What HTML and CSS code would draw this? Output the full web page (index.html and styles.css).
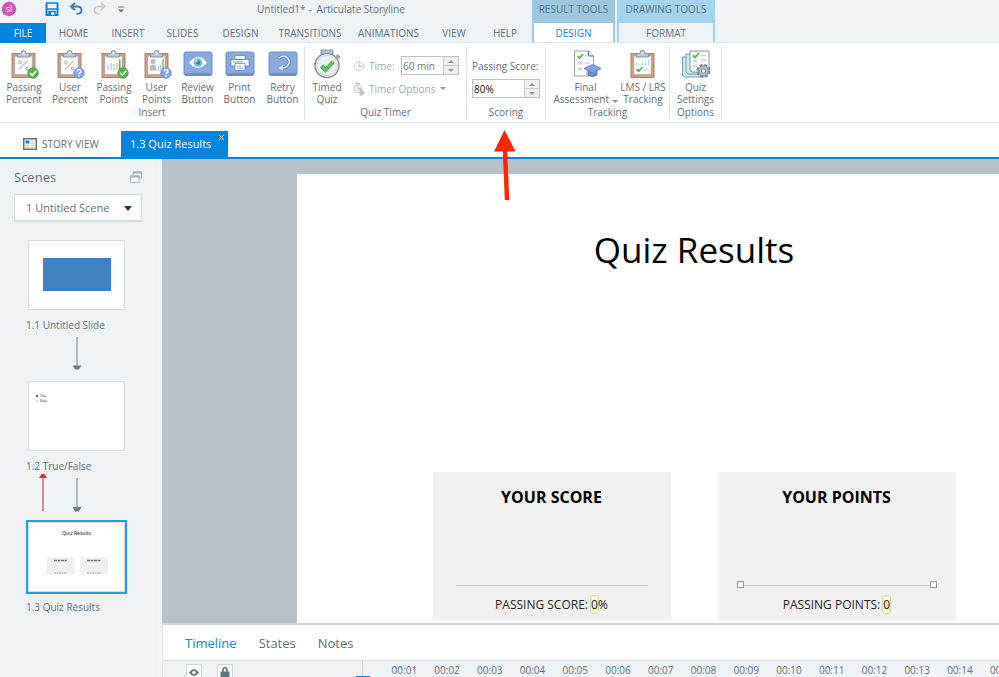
FILE: index.html
```html
<!DOCTYPE html>
<html lang="en">
<head>
    <meta charset="UTF-8">
    <title>Untitled1* - Articulate Storyline</title>
    <link rel="stylesheet" href="styles.css">
</head>
<body>

<!-- shared icon shapes -->
<svg class="defs" width="0" height="0" aria-hidden="true">
    <symbol id="clipboard" viewBox="0 0 32 32">
        <rect x="4" y="5.500" width="23" height="24" fill="#dc9a76" stroke="#94807a" stroke-width=".9"/>
        <rect x="6.700" y="8" width="17.600" height="18.700" fill="#fdfdfd" stroke="#a3a7ad" stroke-width=".9"/>
        <path d="M9.500 9v-3.500h3.500q0-3 2.500-3t2.500 3h3.500v3.500z" fill="#c0cad9" stroke="#8591a0"/>
        <circle cx="15.500" cy="5" r="1" fill="#fff"/>
    </symbol>
    <symbol id="percent" viewBox="0 0 32 32">
        <path d="M11 21.500L19.500 13" stroke="#c2c2c2" stroke-width="1.300"/>
        <circle cx="12" cy="14.500" r="1.300" fill="none" stroke="#c2c2c2" stroke-width="1.200"/>
        <circle cx="18.500" cy="20.500" r="1.300" fill="none" stroke="#c2c2c2" stroke-width="1.200"/>
    </symbol>
    <symbol id="ok" viewBox="0 0 32 32">
        <circle cx="25" cy="25" r="5.200" fill="#58b24c" stroke="#4ea447"/>
        <path d="M22 25l2.300 2.300 4-4.500" fill="none" stroke="#fff" stroke-width="1.600"/>
    </symbol>
    <symbol id="ask" viewBox="0 0 32 32">
        <circle cx="25" cy="25" r="5.200" fill="#86a5e2" stroke="#7293d4"/>
        <path d="M23 23.500q.2-2 2-2t2 1.700q0 1-1.200 1.700-.8.500-.8 1.400M25 27.500v1.300" fill="none" stroke="#fff" stroke-width="1.400"/>
    </symbol>
    <symbol id="tile" viewBox="0 0 32 32">
        <rect x="2" y="4" width="28" height="23.500" rx="2" fill="#89a9df" stroke="#6c8ccb"/>
        <path d="M3 26h26" stroke="#6f90cd" stroke-width="2"/>
    </symbol>
</svg>

<header class="top">
    <div class="top-main">
        <div class="titlebar">
            <svg class="logo" viewBox="0 0 16 16" width="16" height="16">
                <circle cx="8" cy="8" r="7.200" fill="#d94fb4"/>
                <text x="8" y="11" text-anchor="middle" font-size="9" fill="#fff">sl</text>
            </svg>
            <div class="quick">
                <button aria-label="Save"><svg width="14" height="14" viewBox="0 0 14 14"><path d="M1.500 1v12h11V1" fill="none" stroke="#0b86dc" stroke-width="2"/><path d="M1 1h12M1 7h12" stroke="#0b86dc" stroke-width="1.500"/><path d="M4 8.500h6V13H4z" fill="#fff"/><path d="M4 13V9.500h6V13M5.500 10v3" fill="none" stroke="#0b86dc" stroke-width="1.500"/></svg></button>
                <button aria-label="Undo"><svg width="14" height="14" viewBox="0 0 14 14"><path d="M6 1L2 4.500 6 8M2.500 4.500H9q3.500.2 3.500 3.700T7.500 12" fill="none" stroke="#3a7cb4" stroke-width="1.900"/></svg></button>
                <button aria-label="Redo"><svg width="14" height="14" viewBox="0 0 14 14"><path d="M8 1l4 3.500L8 8M11.500 4.500H5Q1.500 4.700 1.500 8.200T6.500 12" fill="none" stroke="#cdd2d6" stroke-width="1.900"/></svg></button>
                <button aria-label="Customize"><svg width="8" height="14" viewBox="0 0 8 14"><path d="M1 5h6" stroke="#6c777d"/><path d="M1 7.500h6l-3 3z" fill="#6c777d"/></svg></button>
            </div>
            <h1 class="app-title">Untitled1* -&nbsp; Articulate Storyline</h1>
        </div>
        <nav class="menu">
            <button class="file">FILE</button>
            <button>HOME</button>
            <button>INSERT</button>
            <button>SLIDES</button>
            <button>DESIGN</button>
            <button>TRANSITIONS</button>
            <button>ANIMATIONS</button>
            <button>VIEW</button>
            <button>HELP</button>
        </nav>
    </div>
    <div class="context result">
        <span>RESULT TOOLS</span>
        <button class="active">DESIGN</button>
    </div>
    <div class="context drawing">
        <span>DRAWING TOOLS</span>
        <button>FORMAT</button>
    </div>
</header>

<section class="ribbon">
    <div class="group insert">
        <div class="items">
            <button class="tool"><svg viewBox="0 0 32 32"><use href="#clipboard"/><use href="#percent"/><use href="#ok"/></svg>Passing<br>Percent</button>
            <button class="tool"><svg viewBox="0 0 32 32"><use href="#clipboard"/><use href="#percent"/><use href="#ask"/></svg>User<br>Percent</button>
            <button class="tool"><svg viewBox="0 0 32 32"><use href="#clipboard"/><path d="M10 22v-5M13 22v-7M16 22v-6M19 22v-7" stroke="#c6c6c6" stroke-width="1.300"/><path d="M21.700 22V11.500" stroke="#5cc056" stroke-width="1.600"/><use href="#ok"/></svg>Passing<br>Points</button>
            <button class="tool"><svg viewBox="0 0 32 32"><use href="#clipboard"/><circle cx="12" cy="13.500" r="2.500" fill="#bcbcbc"/><path d="M8.500 22.500q0-6 3.500-6t3.500 6z" fill="#bcbcbc"/><path d="M17.500 22.500v-4M19.500 22.500v-6" stroke="#c6c6c6" stroke-width="1.200"/><path d="M22 22.500V11.500" stroke="#5cc056" stroke-width="1.400"/><use href="#ask"/></svg>User<br>Points</button>
            <button class="tool"><svg viewBox="0 0 32 32"><use href="#tile"/><path d="M6.500 14.500q9.500-12 19 0-9.500 12-19 0z" fill="#fff" stroke="#6d8fca" stroke-width=".6"/><circle cx="16" cy="14.500" r="4.300" fill="#6bbbe6"/><circle cx="16" cy="14.500" r="2.200" fill="#3a80b6"/><circle cx="14.500" cy="13" r="1" fill="#fff"/></svg>Review<br>Button</button>
            <button class="tool"><svg viewBox="0 0 32 32"><use href="#tile"/><path d="M11 7.500h10v4H11zM7 11.500h18v6.500H7z" fill="#f5f8fc" stroke="#6486c2" stroke-width=".8"/><path d="M9 14h10" stroke="#8ba7da"/><path d="M11 15.500h10v7H11z" fill="#fff" stroke="#6486c2" stroke-width=".8"/><path d="M13 18h4M13 20h6" stroke="#8ba7da"/></svg>Print<br>Button</button>
            <button class="tool"><svg viewBox="0 0 32 32"><use href="#tile"/><path d="M12 10q5-4 8.500 0t0 8q-2 2-4.500 2" fill="none" stroke="#6486c2" stroke-width="3"/><path d="M12 10q5-4 8.500 0t0 8q-2 2-5.500 2" fill="none" stroke="#dbe6f7" stroke-width="1.600"/><path d="M16 17l-4.500 3 4.500 2.700z" fill="#dbe6f7"/></svg>Retry<br>Button</button>
        </div>
        <h2>Insert</h2>
    </div>
    <div class="group timer">
        <div class="items">
            <button class="tool"><svg viewBox="0 0 32 32"><path d="M10 2h12v4H10z" fill="#b8c3d0" stroke="#8591a0"/><path d="M25.500 7l3 3" stroke="#98a2ab" stroke-width="3"/><circle cx="16" cy="17.500" r="12" fill="#eef1f3" stroke="#8d979f" stroke-width="1.600"/><circle cx="16" cy="17.500" r="10" fill="none" stroke="#d5dbe0"/><path d="M10.500 18l4 4 7.500-8" fill="none" stroke="#4a9f4a" stroke-width="4"/><path d="M10.500 18l4 4 7.500-8" fill="none" stroke="#66c05b" stroke-width="2.500"/></svg>Timed<br>Quiz</button>
            <div class="timer-options">
                <div class="row">
                    <svg width="12" height="12" viewBox="0 0 12 12"><circle cx="6" cy="6" r="4.500" fill="none" stroke="#ccc"/><path d="M6 3v3.500h2.500" fill="none" stroke="#bbb"/></svg>
                    <label for="time">Time:</label>
                    <span class="spin muted">
                        <input id="time" type="text" value="60 min">
                        <span class="steps"><button aria-label="More time"><i class="up"></i></button><button aria-label="Less time"><i class="down"></i></button></span>
                    </span>
                </div>
                <button class="row drop">
                    <svg width="12" height="14" viewBox="0 0 12 14"><path d="M3 1.500h4" stroke="#c4c4c4" stroke-width="2"/><circle cx="5" cy="7" r="4" fill="#f2f2f2" stroke="#c8c8c8"/><path d="M5 4.500V7h2M7 6l5 5-5 3z" fill="#c4c4c4" stroke="#c4c4c4" stroke-width=".6"/></svg>
                    <span>Timer Options</span><i class="down"></i>
                </button>
            </div>
        </div>
        <h2>Quiz Timer</h2>
    </div>
    <div class="group scoring">
        <div class="items">
            <label for="score">Passing Score:</label>
            <span class="spin">
                <input id="score" type="text" value="80%">
                <span class="steps"><button aria-label="Raise score"><i class="up"></i></button><button aria-label="Lower score"><i class="down"></i></button></span>
            </span>
        </div>
        <h2>Scoring</h2>
    </div>
    <div class="group tracking">
        <div class="items">
            <button class="tool"><svg viewBox="0 0 32 32"><path d="M4.500 3h14l5 5v20h-19z" fill="#fcfcfc" stroke="#9aa1a7"/><path d="M18.500 3v5h5" fill="#e2e6e9" stroke="#6b747b"/><path d="M7.500 8l2 2 3.500-4" fill="none" stroke="#56b650" stroke-width="1.800"/><path d="M15 8h2M15 15h5M15 20h3" stroke="#d3d6d9" stroke-width="1.500"/><path d="M8 15h4M8 21h4" stroke="#d5d8da" stroke-width="3"/><path d="M18 22v5q4.500 3 9 0v-5z" fill="#6d91d4" stroke="#5878b8"/><path d="M14 20.500l8.500-4 8.500 4-8.500 4.500z" fill="#83a4e0" stroke="#5878b8" stroke-width=".8"/><path d="M17 23v5" stroke="#d0ac6b" stroke-width="1.300"/></svg>Final<br>Assessment <i class="down"></i></button>
            <button class="tool"><svg viewBox="0 0 32 32"><use href="#clipboard"/><path d="M9.500 17v-2M12.500 17v-1M15.500 17v-2M18.500 17v-3M21.500 17v-5" stroke="#a8d6ef" stroke-width="1.200"/><path d="M9.500 21l2.200 2.200L15.500 19" fill="none" stroke="#56b650" stroke-width="1.800"/><path d="M17 22h5" stroke="#d0d0d0"/></svg>LMS / LRS<br>Tracking</button>
        </div>
        <h2>Tracking</h2>
    </div>
    <div class="group options">
        <div class="items">
            <button class="tool"><svg viewBox="0 0 32 32"><g fill="#c6ebf3" stroke="#7f99a3"><path d="M2.500 9v18l2 2h16V9z"/><path d="M6 6v18l2 2h16V6z"/></g><path d="M10 3h19v19l-2 2H12l-2-2z" fill="#fafbfb" stroke="#8b969c"/><path d="M13 7.500l2 2 4-4.500" fill="none" stroke="#56b650" stroke-width="1.800"/><path d="M21 7.500h5M21 12h5" stroke="#ccd1d4" stroke-width="1.500"/><path d="M13 13h4M13 18h4" stroke="#d5d8da" stroke-width="2.500"/><circle cx="23.500" cy="23" r="5.800" fill="#b7c1cc" stroke="#76818c" stroke-width="2.400" stroke-dasharray="3 1.550"/><circle cx="23.500" cy="23" r="5" fill="#b7c1cc" stroke="#8793a0"/><circle cx="23.500" cy="23" r="2.200" fill="#fff" stroke="#76818c"/></svg>Quiz<br>Settings</button>
        </div>
        <h2>Options</h2>
    </div>
</section>

<nav class="doc-tabs">
    <button class="story"><svg width="14" height="12" viewBox="0 0 14 12"><rect x=".75" y=".75" width="12.500" height="10.500" fill="#fff" stroke="#657078" stroke-width="1.500"/><path d="M2.500 2.500h4v3h-4z" fill="#0085de"/><path d="M8 3h3.500M8 5h3.500M2.500 7.500H6M2.500 9.500H6M8 7.500h3.500M8 9.500h3.500" stroke="#bcc3c8"/></svg>STORY VIEW</button>
    <button class="current">1.3 Quiz Results<svg class="close" width="7" height="7" viewBox="0 0 7 7"><path d="M1 1l5 5M6 1L1 6" stroke="#fff"/></svg></button>
</nav>

<main class="workspace">
    <aside class="scenes">
        <div class="scenes-head">
            <h2>Scenes</h2>
            <svg width="12" height="12" viewBox="0 0 12 12"><path d="M3 4V1h8.500v6H9" fill="none" stroke="#a9b3ba"/><path d="M3 1.500h8.500" stroke="#a9b3ba" stroke-width="2"/><rect x=".5" y="5" width="8.500" height="6.500" fill="#fff" stroke="#a9b3ba"/><path d="M.5 5.500H9" stroke="#a9b3ba" stroke-width="2"/></svg>
        </div>
        <div class="picker">
            <select aria-label="Scene"><option>1 Untitled Scene</option></select>
            <i class="down"></i>
        </div>
        <figure class="slide-item">
            <svg class="thumb" viewBox="0 0 95 68"><rect x="14" y="17" width="68" height="33" fill="#4081c1"/></svg>
            <figcaption>1.1 Untitled Slide</figcaption>
        </figure>
        <svg class="links" viewBox="0 0 100 38"><path d="M51 1v30" stroke="#9aa9b0" stroke-width="1.500"/><path d="M46.500 29.500h9l-2.500 4h-4z" fill="#68818a"/></svg>
        <figure class="slide-item">
            <svg class="thumb" viewBox="0 0 95 68"><circle cx="8" cy="14" r="1.200" fill="#667"/><text x="11" y="15" font-size="3">True</text><circle cx="8" cy="19" r="1" fill="none" stroke="#bbb" stroke-width=".5"/><text x="11" y="20" font-size="3">False</text></svg>
            <figcaption>1.2 True/False</figcaption>
        </figure>
        <svg class="links" viewBox="0 0 100 38"><path d="M51 1v30" stroke="#9aa9b0" stroke-width="1.500"/><path d="M46.500 30h9l-2.500 4.500h-4z" fill="#68818a"/><path d="M17 1v33" stroke="#d4696e" stroke-width="1.500"/><path d="M13 1h8l-2.500-4h-3z" fill="#c9383e"/></svg>
        <figure class="slide-item selected">
            <svg class="thumb" viewBox="0 0 95 68"><text x="47.500" y="12" font-size="5" text-anchor="middle">Quiz Results</text><path d="M17.500 34.500h28v17h-28zM51 34.500h28v17H51z" fill="#f0f0f0"/><path d="M25 37.500h13M58 37.500h14" stroke="#777" stroke-width="1.500" stroke-dasharray="3 .5"/><path d="M25 50h13M58 50h14" stroke="#aaa" stroke-dasharray="2 .5"/></svg>
            <figcaption>1.3 Quiz Results</figcaption>
        </figure>
    </aside>

    <div class="editor">
        <div class="canvas">
            <article class="slide">
                <h2 class="slide-title">Quiz Results</h2>
                <div class="cards">
                    <section class="card">
                        <h3>YOUR SCORE</h3>
                        <div class="rule"></div>
                        <p>PASSING SCORE: <span class="ref">0</span>%</p>
                    </section>
                    <section class="card">
                        <h3>YOUR POINTS</h3>
                        <div class="rule picked"></div>
                        <p>PASSING POINTS: <span class="ref">0</span></p>
                    </section>
                </div>
            </article>
        </div>
        <section class="timeline">
            <nav class="panel-tabs">
                <button class="on">Timeline</button>
                <button>States</button>
                <button>Notes</button>
            </nav>
            <div class="ruler">
                <div class="toggles">
                    <button aria-label="Show"><svg width="12" height="12" viewBox="0 0 12 12"><path d="M1 6.500q5-7 10 0-5 7-10 0z" fill="#5d757d"/><circle cx="6" cy="6.500" r="1.800" fill="#fff"/></svg></button>
                    <button aria-label="Lock"><svg width="12" height="12" viewBox="0 0 12 12"><path d="M4 6V3q2-3 4 0v3" fill="none" stroke="#5d757d" stroke-width="1.600"/><path d="M1.500 5.500h9V12h-9z" fill="#5d757d"/></svg></button>
                </div>
                <i class="playhead"></i>
                <div class="ticks">
                    <span>00:01</span><span>00:02</span><span>00:03</span><span>00:04</span><span>00:05</span>
                    <span>00:06</span><span>00:07</span><span>00:08</span><span>00:09</span><span>00:10</span>
                    <span>00:11</span><span>00:12</span><span>00:13</span><span>00:14</span><span>00:15</span>
                </div>
            </div>
        </section>
    </div>
</main>

<svg class="pointer" width="24" height="74" viewBox="0 0 24 74"><path d="M11.500 2L1 23.500h8.800l2 48.500h4.400l-2-48.500H22.500z" fill="#ff2600"/></svg>

</body>
</html>
```
FILE: styles.css
```css
*, ::before, ::after {
    box-sizing: border-box;
}
body {
    display: flex;
    flex-direction: column;
    height: 100vh;
    margin: 0;
    overflow: hidden;
    background: #fff;
    color: #5f7079;
    font: 10px/12px "Open Sans", "Noto Sans", sans-serif;
}
h1, h2, h3, p, figure {
    margin: 0;
    font-size: inherit;
    font-weight: normal;
}
button, input, select {
    margin: 0;
    padding: 0;
    border: 0;
    border-radius: 0;
    background: none;
    color: inherit;
    font: inherit;
}
svg {
    display: block;
    overflow: visible;
}
.defs {
    position: absolute;
}
.up, .down {
    display: inline-block;
    border: 3px solid transparent;
}
.up {
    border-top: 0;
    border-bottom-color: #8d959a;
}
.down {
    border-bottom: 0;
    border-top-color: #8d959a;
}

/* title bar and menu */
.top {
    display: flex;
    height: 43px;
    background: #eff3f6;
    border-bottom: 1px solid #dce4e8;
}
.top-main {
    width: 532px;
}
.titlebar {
    display: flex;
    align-items: center;
    height: 23px;
    padding-bottom: 5px;
}
.logo {
    margin-left: 1px;
}
.quick {
    display: flex;
    gap: 10px;
    width: 240px;
    padding-left: 28px;
}
.app-title {
    white-space: nowrap;
}
.menu {
    display: grid;
    grid-template-columns: 46px 55px 54px 55px 61px 78px 79px 52px 50px;
    height: 20px;
}
.file {
    background: #0085de;
    color: #fff;
}
.context {
    display: grid;
    grid-template-rows: 23px 19px;
    padding: 0 2px;
    text-align: center;
}
.context span {
    padding-top: 3px;
}
.context button {
    background: #eff3f6;
}
.context .active {
    background: #fff;
    color: #0b8ae2;
}
.result {
    width: 83px;
    margin-right: 2px;
    background: #9cc8e2;
}
.drawing {
    width: 98px;
    background: #a5d4f1;
}

/* ribbon */
.ribbon {
    display: flex;
    height: 80px;
    padding-top: 3px;
    border-bottom: 1px solid #dfe8eb;
}
.group {
    height: 74px;
    border-right: 1px solid #dfe6ea;
    text-align: center;
}
.items {
    display: grid;
    height: 60px;
}
.tool {
    display: block;
    height: 59px;
    padding-top: 2px;
    line-height: 12px;
    white-space: nowrap;
}
.tool svg {
    width: 32px;
    height: 32px;
    margin: 0 auto 1px;
}
.insert .items {
    grid-template-columns: 48px 44px 44px 41px 41px 43px 43px;
}
.timer .items {
    grid-template-columns: 44px 117px;
}
.timer-options {
    padding: 10px 0 0 4px;
    color: #a3a9ac;
}
.row {
    display: flex;
    align-items: center;
    gap: 4px;
    height: 19px;
}
.row .spin {
    width: 58px;
    margin-left: auto;
    margin-right: 7px;
}
.drop {
    margin-top: 4px;
}
.spin {
    display: flex;
    height: 19px;
    border: 1px solid #bcc2c6;
    background: #fff;
}
.spin input {
    flex: 1;
    width: 0;
    padding-left: 1px;
    color: #111;
}
.muted input {
    color: #777;
}
.steps {
    display: grid;
    width: 15px;
    border-left: 1px solid #c4cacd;
}
.steps button {
    display: flex;
    align-items: center;
    justify-content: center;
    background: #f0f0f0;
}
.steps button + button {
    border-top: 1px solid #ccc;
}
.scoring {
    width: 79px;
    padding: 0 5px;
}
.scoring .items {
    align-content: start;
    gap: 7px;
    padding-top: 14px;
    text-align: left;
}
.tracking .items {
    grid-template-columns: 67px 48px;
    padding: 0 2px 0 6px;
}
.options {
    width: 52px;
}

/* open documents */
.doc-tabs {
    display: flex;
    align-items: flex-end;
    height: 36px;
    border-bottom: 2px solid #0085de;
}
.story {
    display: flex;
    align-items: center;
    gap: 5px;
    width: 121px;
    height: 27px;
    padding-left: 23px;
}
.current {
    position: relative;
    height: 26px;
    padding: 0 17px 0 9px;
    background: #0085de;
    color: #fff;
    font-size: 11px;
}
.close {
    position: absolute;
    top: 3px;
    right: 3px;
}

/* scenes */
.workspace {
    display: flex;
    flex: 1;
    min-height: 0;
}
.scenes {
    width: 162px;
    padding: 9px 15px 0 14px;
    border-right: 5px solid #f4f4f5;
    background: #eff3f6;
}
.scenes-head {
    display: flex;
    align-items: center;
    justify-content: space-between;
    width: 128px;
    height: 18px;
}
.scenes-head h2 {
    font-size: 13px;
    line-height: 18px;
}
.picker {
    position: relative;
    width: 128px;
    margin: 8px 0 18px;
}
.picker select {
    width: 100%;
    height: 28px;
    padding-left: 11px;
    appearance: none;
    border: 1px solid #d3dce1;
    border-bottom-width: 2px;
    background: #fff;
    font-size: 11px;
}
.picker .down {
    position: absolute;
    top: 12px;
    right: 10px;
    border-width: 5px 4px 0;
    border-top-color: #30383c;
}
.slide-item {
    padding: 0 12px;
}
.thumb {
    width: 97px;
    height: 70px;
    margin-left: 2px;
    border: 1px solid #d9dcde;
    background: #fff;
}
.slide-item figcaption {
    margin-top: 9px;
    white-space: nowrap;
}
.links {
    width: 100px;
    height: 38px;
    margin: 5px 0 7px 12px;
}
.selected .thumb {
    outline: 2px solid #18a0e8;
}

/* slide editor */
.editor {
    display: flex;
    flex: 1;
    flex-direction: column;
    min-width: 0;
}
.canvas {
    flex: 1;
    min-height: 0;
    overflow: hidden;
    padding: 15px 0 0 135px;
    background: #b6c1c9;
}
.slide {
    width: 794px;
    height: 595px;
    padding-top: 52px;
    background: #fff;
    color: #000;
    text-align: center;
}
.slide-title {
    font-size: 35px;
    line-height: 48px;
}
.cards {
    display: flex;
    justify-content: center;
    gap: 47px;
    margin-top: 198px;
}
.card {
    width: 238px;
    padding: 13px 23px 5px;
    background: #f1f1f1;
}
.card h3 {
    font-size: 16px;
    font-weight: bold;
    line-height: 24px;
}
.card p {
    margin-top: 9px;
    color: #222;
    font-size: 12px;
    line-height: 20px;
}
.rule {
    position: relative;
    height: 1px;
    margin-top: 76px;
    background: #c8c8c8;
}
.picked::before, .picked::after {
    content: "";
    position: absolute;
    top: -4px;
    width: 7px;
    height: 7px;
    border: 1px solid #999;
    background: #fff;
}
.picked::before {
    left: -4px;
}
.picked::after {
    right: -4px;
}
.ref {
    border-radius: 3px;
    background: #fafad2;
    box-shadow: 0 0 0 1px #d5d6a0;
}

/* timeline */
.timeline {
    height: 54px;
    border-top: 2px solid #d0d6de;
    border-left: 1px solid #dfe6ea;
}
.panel-tabs {
    display: flex;
    gap: 22px;
    height: 35px;
    padding-left: 22px;
    font-size: 13px;
}
.panel-tabs .on {
    color: #0b8ae2;
}
.ruler {
    position: relative;
    display: flex;
    height: 17px;
    border-top: 1px solid #dae1e5;
    background: #eff3f6;
    overflow: hidden;
}
.toggles {
    display: flex;
    gap: 15px;
    width: 200px;
    padding: 3px 0 0 23px;
    border-right: 1px solid #c6d0d6;
}
.toggles button {
    width: 16px;
    height: 16px;
    padding: 1px;
    border: 1px solid #cdd6db;
    background: #fff;
}
.playhead {
    position: absolute;
    bottom: 0;
    left: 193px;
    width: 14px;
    height: 1px;
    background: #0085de;
}
.ticks {
    display: grid;
    flex: 1;
    grid-template-columns: repeat(15, 1fr);
    margin: 0 -25px 0 20px;
    padding-top: 3px;
    text-align: center;
}

.pointer {
    position: absolute;
    top: 128px;
    left: 493px;
}
```
